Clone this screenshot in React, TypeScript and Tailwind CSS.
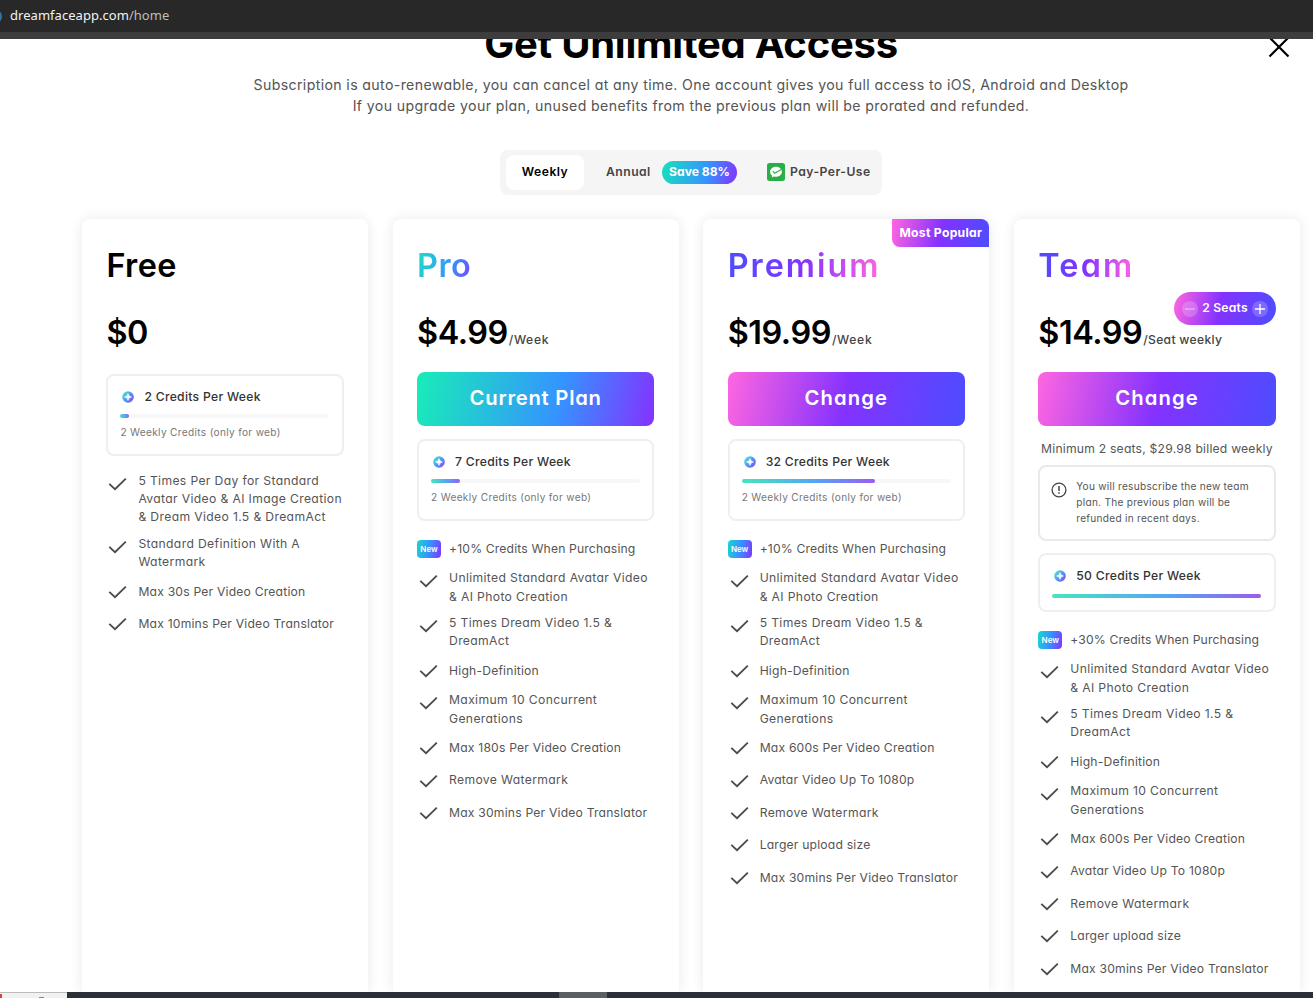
import React from 'react';
import clsx from 'clsx';

interface Plan {
  name: string;
  nameClass: string;
  price: string;
  unit?: string;
  unitClass?: string;
  action?: string;
  actionClass?: string;
  popular?: boolean;
  seats?: boolean;
  credits: string;
  progress: number;
  webCredits?: boolean;
  bonus?: string;
  features: string[][];
}

const plans: Plan[] = [
  {
    name: 'Free',
    nameClass: 'text-black tracking-[0.4px]',
    price: '$0',
    credits: '2 Credits Per Week',
    progress: 4,
    webCredits: true,
    features: [
      ['5 Times Per Day for Standard', 'Avatar Video & AI Image Creation', '& Dream Video 1.5 & DreamAct'],
      ['Standard Definition With A', 'Watermark'],
      ['Max 30s Per Video Creation'],
      ['Max 10mins Per Video Translator'],
    ],
  },
  {
    name: 'Pro',
    nameClass: 'bg-linear-[110deg,#18e8c0,#3593ff_60%,#8438ff] bg-clip-text text-transparent tracking-[0.5px]',
    price: '$4.99',
    unit: '/Week',
    unitClass: 'tracking-[0.65px]',
    action: 'Current Plan',
    actionClass: 'bg-linear-[102deg,#18edb7,#3593ff_60%,#8432ff] tracking-[0.75px]',
    credits: '7 Credits Per Week',
    progress: 14,
    webCredits: true,
    bonus: '+10% Credits When Purchasing',
    features: [
      ['Unlimited Standard Avatar Video', '& AI Photo Creation'],
      ['5 Times Dream Video 1.5 &', 'DreamAct'],
      ['High-Definition'],
      ['Maximum 10 Concurrent', 'Generations'],
      ['Max 180s Per Video Creation'],
      ['Remove Watermark'],
      ['Max 30mins Per Video Translator'],
    ],
  },
  {
    name: 'Premium',
    nameClass: 'bg-linear-[90deg,#4d4dff,#8432ff_50%,#ff66e0] bg-clip-text text-transparent tracking-[2px]',
    price: '$19.99',
    unit: '/Week',
    unitClass: 'tracking-[0.65px]',
    action: 'Change',
    actionClass: 'bg-linear-[102deg,#ff66e0,#8432ff_50%,#4d4dff] tracking-[1.1px]',
    popular: true,
    credits: '32 Credits Per Week',
    progress: 64,
    webCredits: true,
    bonus: '+10% Credits When Purchasing',
    features: [
      ['Unlimited Standard Avatar Video', '& AI Photo Creation'],
      ['5 Times Dream Video 1.5 &', 'DreamAct'],
      ['High-Definition'],
      ['Maximum 10 Concurrent', 'Generations'],
      ['Max 600s Per Video Creation'],
      ['Avatar Video Up To 1080p'],
      ['Remove Watermark'],
      ['Larger upload size'],
      ['Max 30mins Per Video Translator'],
    ],
  },
  {
    name: 'Team',
    nameClass: 'bg-linear-[90deg,#4d4dff,#8432ff_50%,#ff66e0] bg-clip-text text-transparent tracking-[2.2px]',
    price: '$14.99',
    unit: '/Seat weekly',
    unitClass: 'tracking-[0.3px]',
    action: 'Change',
    actionClass: 'bg-linear-[102deg,#ff66e0,#8432ff_50%,#4d4dff] tracking-[1.1px]',
    seats: true,
    credits: '50 Credits Per Week',
    progress: 100,
    bonus: '+30% Credits When Purchasing',
    features: [
      ['Unlimited Standard Avatar Video', '& AI Photo Creation'],
      ['5 Times Dream Video 1.5 &', 'DreamAct'],
      ['High-Definition'],
      ['Maximum 10 Concurrent', 'Generations'],
      ['Max 600s Per Video Creation'],
      ['Avatar Video Up To 1080p'],
      ['Remove Watermark'],
      ['Larger upload size'],
      ['Max 30mins Per Video Translator'],
    ],
  },
];

const CreditIcon = () => (
  <svg width="12" height="12" viewBox="0 0 12 12" className="shrink-0">
    <defs>
      <linearGradient id="credit" x1="0" y1="0.1" x2="1" y2="0.9">
        <stop offset="0" stopColor="#4ff0c8" />
        <stop offset="0.5" stopColor="#4c9af5" />
        <stop offset="1" stopColor="#8a45f5" />
      </linearGradient>
    </defs>
    <circle cx="6" cy="6" r="5.8" fill="url(#credit)" />
    <path d="M6 2.6Q6.4 5.6 9.4 6Q6.4 6.4 6 9.4Q5.6 6.4 2.6 6Q5.6 5.6 6 2.6Z" fill="#fff" stroke="#fff" strokeWidth="0.7" />
  </svg>
);

const CheckIcon = () => (
  <svg width="24" height="24" viewBox="0 0 24 24" fill="none" className="shrink-0">
    <path d="M3.3 11.9L9 17.2L19.8 6.6" stroke="#4a4a4a" strokeWidth="1.8" />
  </svg>
);

const CreditsBox = ({ plan }: { plan: Plan }) => (
  <div
    className={clsx(
      'rounded-lg border-2 border-[#efefef] px-3 pt-[11px]',
      plan.webCredits ? 'h-[82px]' : 'h-[59px]'
    )}
  >
    <div className="flex h-5 items-center gap-[10px] pl-[2px] text-[12.15px] font-medium tracking-[0.3px] text-[#333]">
      <CreditIcon />
      <span className="whitespace-nowrap">{plan.credits}</span>
    </div>
    <div className={clsx('h-1 w-[209px] rounded-full bg-[#f7f7f7]', plan.webCredits ? 'mt-[7px]' : 'mt-2')}>
      <div
        className="h-full rounded-full bg-linear-[90deg,#45e5bd,#55a5f5_55%,#9a5cf0]"
        style={{ width: `${plan.progress}%` }}
      />
    </div>
    {plan.webCredits && (
      <p className="mt-[6px] whitespace-nowrap text-[10.1px] leading-4 tracking-[0.33px] text-[#777]">
        2 Weekly Credits (only for web)
      </p>
    )}
  </div>
);

const SeatPicker = () => (
  <div className="absolute top-[73px] right-[24px] flex h-[33px] w-[102px] items-center justify-between rounded-full bg-linear-[102deg,#ff66e0,#8432ff_45%,#4d4dff] px-2 text-[12.15px] font-semibold text-white">
    <svg width="16" height="16" viewBox="0 0 16 16">
      <circle cx="8" cy="8" r="8" fill="#fff" fillOpacity="0.2" />
      <path d="M3 8H13" stroke="#fff" strokeOpacity="0.6" />
    </svg>
    <span className="tracking-[0.2px] whitespace-nowrap">2 Seats</span>
    <svg width="16" height="16" viewBox="0 0 16 16">
      <circle cx="8" cy="8" r="8" fill="#fff" fillOpacity="0.2" />
      <path d="M3 8H13M8 3V13" stroke="#fff" strokeWidth="1.3" />
    </svg>
  </div>
);

const TeamNotice = () => (
  <>
    <p className="mt-[13px] text-center text-[12.15px] leading-5 tracking-[0.22px] whitespace-nowrap text-[#555]">
      Minimum 2 seats, $29.98 billed weekly
    </p>
    <div className="mt-[6px] mb-3 flex h-[76px] gap-[9px] rounded-lg border-2 border-[#e9e9e9] pt-[11px] pl-[11px]">
      <svg width="16" height="16" viewBox="0 0 16 16" fill="none" className="mt-[4px] shrink-0">
        <circle cx="8" cy="8" r="6.9" stroke="#444" strokeWidth="1.3" />
        <path d="M8 4V9M8 10.2V11.8" stroke="#444" strokeWidth="1.5" />
      </svg>
      <p className="whitespace-nowrap text-[10.1px] leading-4 tracking-[0.27px] text-[#555]">
        You will resubscribe the new team
        <br />
        plan. The previous plan will be
        <br />
        refunded in recent days.
      </p>
    </div>
  </>
);

const PlanCard = ({ plan }: { plan: Plan }) => (
  <section className="relative h-full rounded-t-lg bg-white px-[24.4px] pt-[22px] shadow-[0_0_13px_rgba(0,0,0,0.09)]">
    {plan.popular && (
      <div className="absolute top-0 right-0 flex h-7 w-[97px] items-center justify-center rounded-tr-lg rounded-bl-lg bg-linear-[102deg,#ff66e0,#8432ff_50%,#4d4dff] text-[12.15px] font-bold tracking-[0.3px] whitespace-nowrap text-white">
        Most Popular
      </div>
    )}
    {plan.seats && <SeatPicker />}
    <h2 className={clsx('w-fit pt-px text-[32.4px] leading-[48px] font-semibold', plan.nameClass)}>{plan.name}</h2>
    <div className="mt-[19px] flex h-[48px] items-baseline whitespace-nowrap">
      <span className="text-[32.4px] leading-[48px] font-semibold tracking-[-0.45px] text-black">{plan.price}</span>
      <span className={clsx('ml-px text-[12.15px] font-medium text-[#444]', plan.unitClass)}>{plan.unit}</span>
    </div>
    {plan.action ? (
      <button
        className={clsx(
          'mt-[15px] flex h-[54px] w-full items-center justify-center rounded-lg pb-[2px] text-[20.25px] font-semibold text-white',
          plan.actionClass
        )}
      >
        {plan.action}
      </button>
    ) : (
      <div className="h-[17px]" />
    )}
    {plan.seats ? <TeamNotice /> : plan.action && <div className="h-[13px]" />}
    <CreditsBox plan={plan} />
    <ul className="mt-4 text-[12.15px] leading-[18.2px] text-[#555]">
      {plan.bonus && (
        <li className="mb-[8.4px] flex h-6 items-center gap-2">
          <span className="flex h-[18px] w-6 items-center justify-center rounded bg-linear-[102deg,#18d8cc,#3593ff_50%,#8432ff] text-[8px] font-semibold text-white">
            New
          </span>
          <span className="tracking-[0.16px] whitespace-nowrap">{plan.bonus}</span>
        </li>
      )}
      {plan.features.map((lines) => (
        <li key={lines[0]} className="mb-[8.4px] flex min-h-6 gap-2">
          <CheckIcon />
          <div
            className={clsx(
              'self-center whitespace-nowrap',
              lines.length > 1 || lines[0] === 'Remove Watermark' ? 'tracking-[0.36px]' : 'tracking-[0.2px]'
            )}
          >
            {lines.map((line) => (
              <p key={line}>{line}</p>
            ))}
          </div>
        </li>
      ))}
    </ul>
  </section>
);

const BillingTabs = () => (
  <div className="mx-auto flex h-[45px] w-[382px] items-center rounded-lg bg-[#f5f5f5] pl-[6px] text-[12.15px] font-semibold tracking-[0.48px] whitespace-nowrap text-[#444]">
    <button className="h-[35px] w-[78px] rounded-lg bg-white text-black">Weekly</button>
    <button className="ml-[22px] flex w-[131px] items-center justify-between">
      Annual
      <span className="flex h-[23px] w-[75px] items-center justify-center rounded-full bg-linear-[102deg,#18e0bd,#3593ff_60%,#8432ff] font-bold tracking-normal text-white">
        Save 88%
      </span>
    </button>
    <button className="ml-[30px] flex items-center gap-[5px]">
      <svg width="18" height="18" viewBox="0 0 18 18">
        <rect width="18" height="18" rx="2.5" fill="#2aae47" />
        <path d="M9 3.8C5.7 3.8 3.1 6 3.1 8.8C3.1 10.4 3.9 11.8 5.2 12.7L4.7 14.5L6.9 13.5C7.6 13.7 8.3 13.8 9 13.8C12.3 13.8 14.9 11.6 14.9 8.8C14.9 6 12.3 3.8 9 3.8Z" fill="#fff" />
        <path d="M5.9 8.2L7.7 10.3L14.3 6.5" stroke="#2aae47" strokeWidth="1.1" fill="none" />
      </svg>
      Pay-Per-Use
    </button>
  </div>
);

export default function App() {
  return (
    <div className="flex h-screen w-full flex-col overflow-hidden bg-white font-['Inter',sans-serif] [font-feature-settings:'cv11']">
      <header className="flex h-[39px] shrink-0 items-center border-b-[7px] border-[#3d3d3d] bg-[#282828]">
        <span className="-ml-[13px] size-[15px] rounded-full bg-[#2c7896]" />
        <span className="ml-2 font-['Noto_Sans',sans-serif] text-[13px] tracking-[0.04px] text-[#f2f2f2]">
          dreamfaceapp.com<span className="text-[#bdbdbd]">/home</span>
        </span>
      </header>

      <main className="relative flex min-h-0 flex-1 flex-col overflow-hidden pr-[13px] pl-[82px]">
        <button className="absolute -top-[3px] right-[23px]" aria-label="Close">
          <svg width="22" height="22" viewBox="0 0 22 22">
            <path d="M1.5 1.5L20.5 20.5M20.5 1.5L1.5 20.5" stroke="#000" strokeWidth="2.2" />
          </svg>
        </button>
        <h1 className="-mt-[25px] shrink-0 text-center text-[40px] leading-[60px] font-bold tracking-[-0.25px] whitespace-nowrap text-black">
          Get Unlimited Access
        </h1>
        <p className="shrink-0 text-center text-[14.17px] leading-[21px] tracking-[0.36px] whitespace-nowrap text-[#555]">
          Subscription is auto-renewable, you can cancel at any time. One account gives you full access to iOS, Android and Desktop
          <br />
          If you upgrade your plan, unused benefits from the previous plan will be prorated and refunded.
        </p>
        <div className="mt-[34px] shrink-0">
          <BillingTabs />
        </div>
        <div className="mt-6 grid min-h-0 flex-1 grid-cols-4 gap-[24.5px]">
          {plans.map((plan) => (
            <PlanCard key={plan.name} plan={plan} />
          ))}
        </div>
      </main>

      <footer className="flex h-[6px] shrink-0 bg-[#2b3038]">
        <div className="flex w-[67px] items-end border-t border-[#bbb] bg-[#f1f1f1]">
          <span className="h-1 w-[2px] bg-[#d9404c]" />
          <span className="ml-[37px] h-px w-[5px] bg-[#8d8375]" />
        </div>
        <div className="ml-[492px] w-12 bg-[#5b5e63]" />
      </footer>
    </div>
  );
}
